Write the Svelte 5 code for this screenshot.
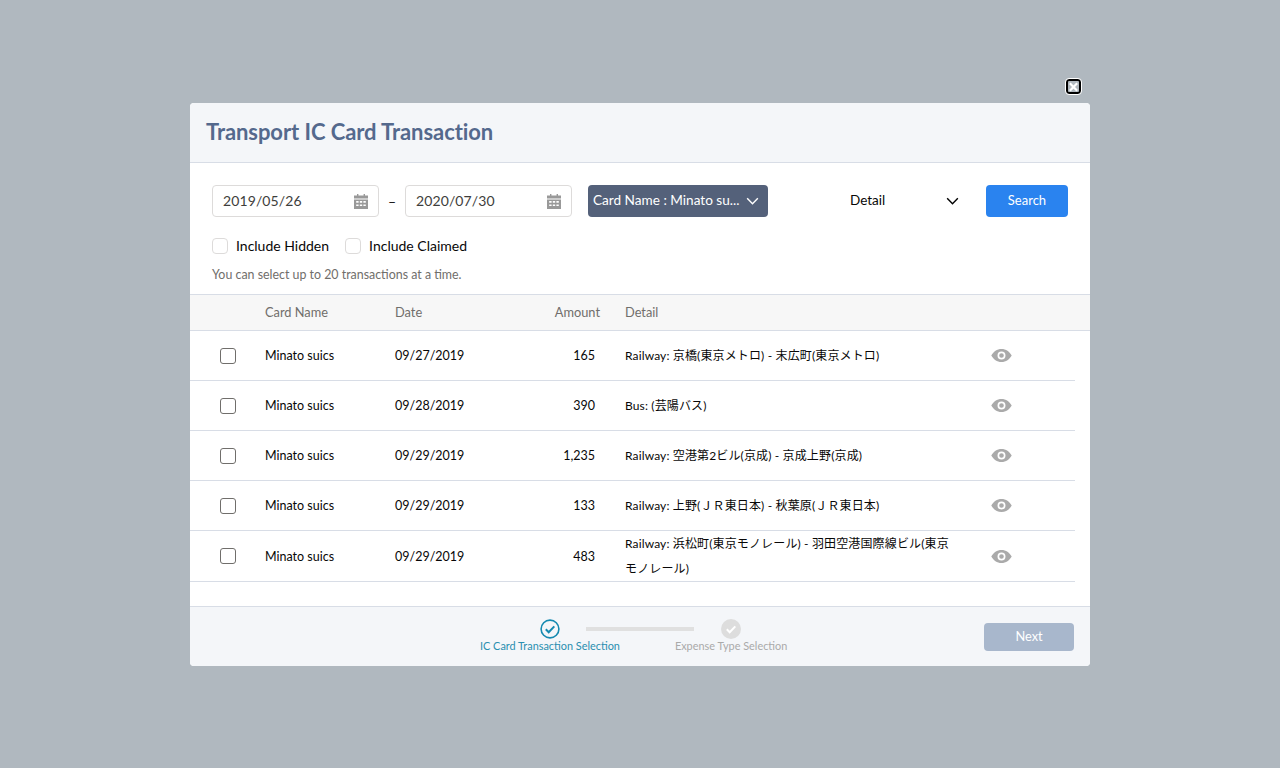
<script>
	const rows = [
		{ card: 'Minato suics', date: '09/27/2019', amount: '165', detail: 'Railway: 京橋(東京メトロ) - 末広町(東京メトロ)' },
		{ card: 'Minato suics', date: '09/28/2019', amount: '390', detail: 'Bus: (芸陽バス)' },
		{ card: 'Minato suics', date: '09/29/2019', amount: '1,235', detail: 'Railway: 空港第2ビル(京成) - 京成上野(京成)' },
		{ card: 'Minato suics', date: '09/29/2019', amount: '133', detail: 'Railway: 上野(\uFF2A\uFF32東日本) - 秋葉原(\uFF2A\uFF32東日本)' },
		{ card: 'Minato suics', date: '09/29/2019', amount: '483', detail: 'Railway: 浜松町(東京モノレール) - 羽田空港国際線ビル(東京モノレール)' }
	];
	const dates = ['2019/05/26', '2020/07/30'];
	const checks = ['Include Hidden', 'Include Claimed'];
</script>

<div class="backdrop">
	<div class="modal">
		<button class="close" aria-label="Close">
			<svg viewBox="0 0 12 12" width="12" height="12"><path d="M2 2l8 8M10 2l-8 8" stroke="#fff" stroke-width="2.4" fill="none" /></svg>
		</button>

		<header class="head">
			<h1>Transport IC Card Transaction</h1>
		</header>

		<section class="filters">
			<div class="filter-row">
				<div class="date">
					<span>{dates[0]}</span>
					<svg viewBox="0 0 14 15" width="14" height="15">
						<path fill="#999" fill-rule="evenodd" d="M3 0h1.4v1.5h5.200V0H11v1.500h3v3H0v-3h3zM0 5.400h14V15H0zM2.200 7v1.700h2.400V7zm3.600 0v1.700h2.400V7zm3.600 0v1.700h2.400V7zM2.200 10.400v1.700h2.400v-1.700zm3.600 0v1.700h2.400v-1.700zm3.600 0v1.700h2.400v-1.700z" />
					</svg>
				</div>
				<span class="dash">–</span>
				<div class="date">
					<span>{dates[1]}</span>
					<svg viewBox="0 0 14 15" width="14" height="15">
						<path fill="#999" fill-rule="evenodd" d="M3 0h1.4v1.5h5.200V0H11v1.500h3v3H0v-3h3zM0 5.400h14V15H0zM2.200 7v1.700h2.400V7zm3.600 0v1.700h2.400V7zm3.600 0v1.700h2.400V7zM2.200 10.400v1.700h2.400v-1.700zm3.600 0v1.700h2.400v-1.700zm3.600 0v1.700h2.400v-1.700z" />
					</svg>
				</div>
				<div class="card-select">
					<span>Card Name : Minato su...</span>
					<svg viewBox="0 0 14 9" width="13" height="8"><path d="M1 1.500l6 6 6-6" stroke="#fff" stroke-width="1.600" fill="none" /></svg>
				</div>
				<div class="detail-select">
					<span>Detail</span>
					<svg viewBox="0 0 14 9" width="13" height="8"><path d="M1 1.500l6 6 6-6" stroke="#000" stroke-width="1.600" fill="none" /></svg>
				</div>
				<button class="search">Search</button>
			</div>
			<div class="check-row">
				{#each checks as label}
					<label class="check"><i class="soft-box"></i>{label}</label>
				{/each}
			</div>
			<p class="hint">You can select up to 20 transactions at a time.</p>
		</section>

		<div class="thead grid">
			<span></span>
			<span>Card Name</span>
			<span>Date</span>
			<span class="amount">Amount</span>
			<span class="pad-detail">Detail</span>
			<span></span>
		</div>
		<div class="tbody">
			{#each rows as row}
				<div class="row grid">
					<span class="box-cell"><i class="box"></i></span>
					<span>{row.card}</span>
					<span>{row.date}</span>
					<span class="amount">{row.amount}</span>
					<span class="pad-detail detail">{row.detail}</span>
					<svg class="eye" viewBox="0 0 22 14" width="21" height="13">
						<path fill="#aaa" fill-rule="evenodd" d="M11 0c4.800 0 8.800 2.900 11 7-2.200 4.100-6.200 7-11 7S2.200 11.100 0 7c2.200-4.100 6.200-7 11-7zm0 2.700a4.300 4.300 0 1 0 0 8.600 4.300 4.300 0 0 0 0-8.600zm0 1.800a2.500 2.500 0 1 1 0 5 2.500 2.500 0 0 1 0-5z" />
					</svg>
				</div>
			{/each}
		</div>

		<footer class="foot">
			<div class="steps">
				<div class="step active">
					<svg viewBox="0 0 20 20" width="20" height="20">
						<circle cx="10" cy="10" r="8.900" fill="none" stroke="#1589b0" stroke-width="1.600" />
						<path d="M5.800 10.300l2.900 2.900 5.600-5.800" fill="none" stroke="#1589b0" stroke-width="2" />
					</svg>
					<span>IC Card Transaction Selection</span>
				</div>
				<div class="bar"></div>
				<div class="step">
					<svg viewBox="0 0 20 20" width="20" height="20">
						<circle cx="10" cy="10" r="10" fill="#ddd" />
						<path d="M5.800 10.300l2.900 2.900 5.600-5.800" fill="none" stroke="#fff" stroke-width="2" />
					</svg>
					<span>Expense Type Selection</span>
				</div>
			</div>
			<button class="next">Next</button>
		</footer>
	</div>
</div>

<style>
	:global(body) {
		margin: 0;
		background: #b0b8bf;
	}

	.backdrop {
		height: 768px;
		display: flex;
		justify-content: center;
		padding-top: 103px;
		box-sizing: border-box;
		font-family: Lato, 'Noto Sans CJK JP', sans-serif;
		color: #080707;
	}

	.modal {
		position: relative;
		width: 900px;
		height: 563px;
		background: #fff;
		border-radius: 4px;
		display: flex;
		flex-direction: column;
	}

	.close {
		position: absolute;
		right: 9px;
		top: -24px;
		width: 15px;
		height: 15px;
		padding: 0;
		display: flex;
		align-items: center;
		justify-content: center;
		background: #b0b8bf;
		border: 2px solid #000;
		border-radius: 3px;
		outline: 1px solid #fff;
	}

	.head {
		height: 60px;
		flex: none;
		display: flex;
		align-items: center;
		padding: 0 0 2px 16px;
		box-sizing: border-box;
		background: #f4f6f9;
		border-bottom: 1px solid #d8dde6;
		border-radius: 4px 4px 0 0;
	}

	h1 {
		margin: 0;
		font-size: 22px;
		font-weight: 700;
		letter-spacing: -0.07px;
		color: #54698d;
	}

	.filters {
		height: 131px;
		flex: none;
		padding: 22px 22px 0;
		box-sizing: border-box;
	}

	.filter-row {
		display: flex;
		align-items: center;
		height: 32px;
	}

	.date {
		width: 167px;
		height: 32px;
		box-sizing: border-box;
		display: flex;
		align-items: center;
		justify-content: space-between;
		padding: 0 10px;
		border: 1px solid #dddbda;
		border-radius: 4px;
		font-size: 14px;
		letter-spacing: 0.1px;
		color: #3e3e3c;
	}

	.date span,
	.card-select span,
	.detail-select span {
		margin-bottom: 2px;
	}

	.dash {
		width: 26px;
		text-align: center;
		font-size: 14px;
	}

	.card-select {
		width: 180px;
		height: 32px;
		margin-left: 16px;
		box-sizing: border-box;
		display: flex;
		align-items: center;
		justify-content: space-between;
		padding: 0 9px 0 5px;
		background: #54617a;
		border-radius: 4px;
		color: #fff;
		font-size: 13.6px;
		white-space: nowrap;
	}

	.detail-select {
		width: 109px;
		margin-left: 82px;
		display: flex;
		align-items: center;
		justify-content: space-between;
		font-size: 13.5px;
	}

	.search {
		width: 82px;
		height: 32px;
		margin-left: 27px;
		padding: 0 0 2px;
		border: 0;
		border-radius: 4px;
		background: #2a83ef;
		color: #fff;
		font: inherit;
		font-size: 13px;
	}

	.check-row {
		display: flex;
		gap: 16px;
		margin-top: 21px;
	}

	.check {
		display: flex;
		align-items: center;
		gap: 8px;
		font-size: 14px;
		line-height: 16px;
	}

	.soft-box {
		width: 16px;
		height: 16px;
		box-sizing: border-box;
		border: 1px solid #dddbda;
		border-radius: 4px;
	}

	.hint {
		margin: 13px 0 0;
		font-size: 12.4px;
		line-height: 16px;
		color: #706e6b;
	}

	.grid {
		display: grid;
		grid-template-columns: 75px 130px 140px 75px 355px 26px auto;
		align-items: center;
	}

	.thead {
		height: 37px;
		flex: none;
		box-sizing: border-box;
		padding-bottom: 2px;
		background: #f7f7f7;
		border-top: 1px solid #d8dde6;
		border-bottom: 1px solid #d8dde6;
		font-size: 12.8px;
		color: #706e6b;
	}

	.thead .amount {
		padding-right: 10px;
	}

	.thead span:last-child {
		grid-column: 7;
	}

	.amount {
		text-align: right;
		padding-right: 15px;
	}

	.pad-detail {
		padding-left: 15px;
		padding-right: 10px;
	}

	.tbody {
		flex: 1;
		width: 885px;
	}

	.row {
		height: 50px;
		box-sizing: border-box;
		border-bottom: 1px solid #d8dde6;
		font-size: 12.5px;
	}

	.row:last-child {
		height: 51px;
		padding-bottom: 1px;
	}

	.detail {
		font-size: 12px;
		letter-spacing: 0.14px;
		line-height: 25px;
	}

	.box-cell {
		display: flex;
		padding-left: 30px;
	}

	.box {
		width: 16px;
		height: 16px;
		box-sizing: border-box;
		border: 1px solid #706e6b;
		border-radius: 3px;
	}

	.eye {
		grid-column: 7;
	}

	.foot {
		height: 60px;
		flex: none;
		box-sizing: border-box;
		display: flex;
		align-items: center;
		justify-content: flex-end;
		padding-right: 16px;
		background: #f4f6f9;
		border-top: 1px solid #d8dde6;
		border-radius: 0 0 4px 4px;
	}

	.steps {
		width: 306px;
		margin-right: 198px;
		display: flex;
		align-items: flex-start;
		height: 36px;
		padding-top: 1px;
	}

	.step {
		display: flex;
		flex-direction: column;
		align-items: center;
		font-size: 10.9px;
		line-height: 14px;
		color: #aaa;
		white-space: nowrap;
	}

	.step.active {
		color: #2a8fb0;
	}

	.bar {
		width: 108px;
		height: 4px;
		margin: 8px -19px 0 -34px;
		background: #e0e0e0;
		flex: none;
	}

	.next {
		width: 90px;
		height: 28px;
		padding: 0 0 2px;
		border: 0;
		border-radius: 4px;
		background: #a8b7cc;
		color: #fff;
		font: inherit;
		font-size: 12.8px;
	}
</style>
